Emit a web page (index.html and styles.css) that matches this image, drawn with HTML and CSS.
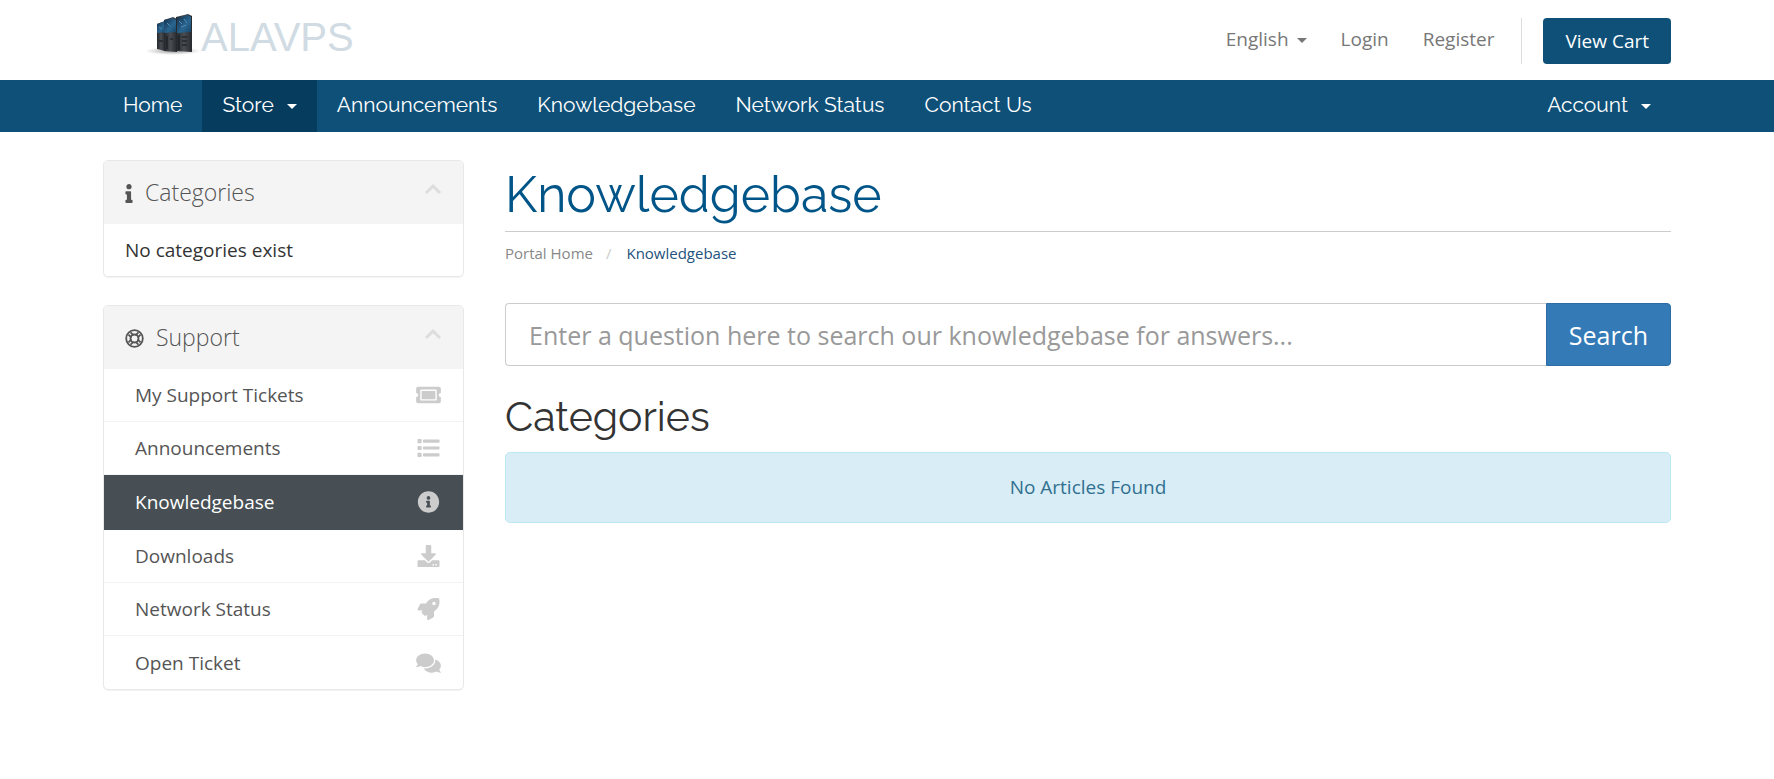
FILE: index.html
```html
<!DOCTYPE html>
<html lang="en">
<head>
    <meta charset="utf-8" />
    <meta name="viewport" content="width=device-width, initial-scale=1" />
    <title>Knowledgebase - ALAVPS</title>
    <link rel="stylesheet" href="styles.css">
</head>
<body>
    <header class="header">
        <div class="container header-inner">
            <a href="#" class="logo">
                <svg class="logo-mark" viewBox="0 0 56 44" aria-hidden="true">
                    <defs>
                        <linearGradient id="glass" x1="0" y1="0" x2="1" y2="1">
                            <stop offset="0" stop-color="#16304a" />
                            <stop offset="0.6" stop-color="#2a6690" />
                            <stop offset="1" stop-color="#174468" />
                        </linearGradient>
                        <linearGradient id="metal" x1="0" y1="0" x2="1" y2="0">
                            <stop offset="0" stop-color="#23282d" />
                            <stop offset="0.5" stop-color="#4a4e53" />
                            <stop offset="1" stop-color="#26292d" />
                        </linearGradient>
                        <radialGradient id="shade">
                            <stop offset="0" stop-color="#777" stop-opacity="0.8" />
                            <stop offset="1" stop-color="#999" stop-opacity="0" />
                        </radialGradient>
                    </defs>
                    <ellipse cx="28" cy="39" rx="28" ry="4" fill="url(#shade)" />
                    <path d="M12 12l8-3v30l-8-2z" fill="url(#metal)" />
                    <path d="M12 12l8-3v11l-8 1z" fill="url(#glass)" />
                    <path d="M19 8l9-3 4 2v33l-13-1z" fill="url(#metal)" />
                    <path d="M19 8l9-2 3 2v12l-12 1z" fill="url(#glass)" />
                    <path d="M31 5l12-3 4 2v36l-16-1z" fill="url(#metal)" />
                    <path d="M32 6l11-3 3 2v15l-14 1z" fill="url(#glass)" />
                    <path d="M14 29h4M22 24v13M25 27h3M34 23v15M37 25h5M37 29h5M37 33h5" stroke="#15191d" stroke-width="1" />
                    <path d="M34 9l3 3M39 7l3 4M36 15l5-2M22 11l3 3M14 15l3 2" stroke="#4f8dbb" stroke-width="1" />
                </svg>
                <span class="logo-text">ALAVPS</span>
            </a>
            <ul class="top-nav">
                <li><a href="#">English<span class="caret"></span></a></li>
                <li><a href="#">Login</a></li>
                <li><a href="#">Register</a></li>
                <li class="primary-action"><a href="#" class="btn-cart">View Cart</a></li>
            </ul>
        </div>
    </header>

    <nav class="main-menu">
        <div class="container menu-inner">
            <a href="#">Home</a>
            <a href="#" class="open">Store<span class="caret"></span></a>
            <a href="#">Announcements</a>
            <a href="#">Knowledgebase</a>
            <a href="#">Network Status</a>
            <a href="#">Contact Us</a>
            <a href="#" class="account">Account<span class="caret"></span></a>
        </div>
    </nav>

    <div class="container main-body">
        <aside class="sidebar">
            <section class="panel">
                <h3 class="panel-heading">
                    <svg class="icon-info" viewBox="0 0 192 512"><path d="M20 424.229h20V279.771H20c-11.046 0-20-8.954-20-20V212c0-11.046 8.954-20 20-20h112c11.046 0 20 8.954 20 20v212.229h20c11.046 0 20 8.954 20 20V492c0 11.046-8.954 20-20 20H20c-11.046 0-20-8.954-20-20v-47.771c0-11.046 8.954-20 20-20zM96 0C56.235 0 24 32.235 24 72s32.235 72 72 72 72-32.235 72-72S135.764 0 96 0z"/></svg>
                    Categories
                    <svg class="minimise" viewBox="0 0 18 12"><path d="M2 10l7-7 7 7"/></svg>
                </h3>
                <div class="panel-body">No categories exist</div>
            </section>

            <section class="panel">
                <h3 class="panel-heading">
                    <svg class="icon-ring" viewBox="0 0 512 512">
                        <circle cx="256" cy="256" r="224"/>
                        <circle cx="256" cy="256" r="108"/>
                        <path d="M94 150l80 80M150 94l80 80M418 150l-80 80M362 94l-80 80M94 362l80-80M150 418l80-80M418 362l-80-80M362 418l-80-80"/>
                    </svg>
                    Support
                    <svg class="minimise" viewBox="0 0 18 12"><path d="M2 10l7-7 7 7"/></svg>
                </h3>
                <div class="list-group">
                    <a href="#">My Support Tickets
                        <svg viewBox="0 0 576 512"><path d="M128 160h320v192H128V160zm400 96c0 26.51 21.49 48 48 48v96c0 26.51-21.49 48-48 48H48c-26.51 0-48-21.49-48-48v-96c26.51 0 48-21.49 48-48s-21.49-48-48-48v-96c0-26.51 21.49-48 48-48h480c26.51 0 48 21.49 48 48v96c-26.51 0-48 21.49-48 48zm-48-104c0-13.255-10.745-24-24-24H120c-13.255 0-24 10.745-24 24v208c0 13.255 10.745 24 24 24h336c13.255 0 24-10.745 24-24V152z"/></svg>
                    </a>
                    <a href="#">Announcements
                        <svg viewBox="0 0 512 512">
                            <rect x="0" y="48" width="96" height="96" rx="16"/><rect x="128" y="60" width="384" height="72" rx="16"/>
                            <rect x="0" y="208" width="96" height="96" rx="16"/><rect x="128" y="220" width="384" height="72" rx="16"/>
                            <rect x="0" y="368" width="96" height="96" rx="16"/><rect x="128" y="380" width="384" height="72" rx="16"/>
                        </svg>
                    </a>
                    <a href="#" class="active">Knowledgebase
                        <svg viewBox="0 0 512 512"><path d="M256 8C119.043 8 8 119.083 8 256c0 136.997 111.043 248 248 248s248-111.003 248-248C504 119.083 392.957 8 256 8zm0 110c23.196 0 42 18.804 42 42s-18.804 42-42 42-42-18.804-42-42 18.804-42 42-42zm56 254c0 6.627-5.373 12-12 12h-88c-6.627 0-12-5.373-12-12v-24c0-6.627 5.373-12 12-12h12v-64h-12c-6.627 0-12-5.373-12-12v-24c0-6.627 5.373-12 12-12h64c6.627 0 12 5.373 12 12v100h12c6.627 0 12 5.373 12 12v24z"/></svg>
                    </a>
                    <a href="#">Downloads
                        <svg viewBox="0 0 512 512"><path d="M216 0h80c13.3 0 24 10.7 24 24v168h87.7c17.8 0 26.7 21.5 14.1 34.1L269.7 378.3c-7.5 7.5-19.8 7.5-27.3 0L90.1 226.1c-12.6-12.6-3.7-34.1 14.1-34.1H192V24c0-13.3 10.7-24 24-24zm296 376v112c0 13.3-10.7 24-24 24H24c-13.3 0-24-10.7-24-24V376c0-13.3 10.7-24 24-24h146.7l49 49c20.1 20.1 52.5 20.1 72.6 0l49-49H488c13.3 0 24 10.7 24 24zm-124 88c0-11-9-20-20-20s-20 9-20 20 9 20 20 20 20-9 20-20zm64 0c0-11-9-20-20-20s-20 9-20 20 9 20 20 20 20-9 20-20z"/></svg>
                    </a>
                    <a href="#">Network Status
                        <svg viewBox="0 0 512 512"><path d="M505.12 19.094c-1.19-5.531-6.658-11-12.207-12.188C460.716 0 435.507 0 410.407 0 307.175 0 245.269 55.203 199.052 128H94.838c-16.348.016-35.557 11.875-42.887 26.484L2.516 253.297A28.4 28.4 0 0 0 0 264a24 24 0 0 0 24 24h103.816l-22.474 22.469c-11.365 11.361-12.996 32.258 0 45.25l50.904 50.906c11.156 11.188 32.156 13.156 45.277 0l22.475-22.469V488a24 24 0 0 0 24 24 28.56 28.56 0 0 0 10.712-2.516l98.728-49.39c14.629-7.297 26.508-26.5 26.508-42.86V312.797c72.598-46.313 128.035-108.406 128.035-211.094.094-25.203.094-50.406-6.861-82.609zM384 168a40 40 0 1 1 40-40 40 40 0 0 1-40 40z"/></svg>
                    </a>
                    <a href="#">Open Ticket
                        <svg viewBox="0 0 576 512"><path d="M416 192c0-88.4-93.1-160-208-160S0 103.6 0 192c0 34.3 14.1 65.9 38 92-13.4 30.2-35.5 54.2-35.8 54.5-2.2 2.3-2.8 5.7-1.5 8.7S4.8 352 8 352c36.6 0 66.9-12.3 88.7-25 32.2 15.7 70.3 25 111.3 25 114.9 0 208-71.6 208-160zm122 220c23.9-26 38-57.7 38-92 0-66.9-53.5-124.2-129.3-148.1.9 6.6 1.3 13.3 1.3 20.1 0 105.9-107.7 192-240 192-10.8 0-21.3-.8-31.7-1.9C207.8 439.6 281.8 480 368 480c41 0 79.1-9.2 111.3-25 21.8 12.7 52.1 25 88.7 25 3.2 0 6.1-1.9 7.3-4.8 1.3-2.9.7-6.3-1.5-8.7-.3-.3-22.4-24.2-35.8-54.5z"/></svg>
                    </a>
                </div>
            </section>
        </aside>

        <main class="content">
            <h1>Knowledgebase</h1>
            <ol class="breadcrumb">
                <li><a href="#">Portal Home</a></li>
                <li class="active">Knowledgebase</li>
            </ol>

            <form class="kb-search">
                <input type="text" aria-label="Search the knowledgebase" placeholder="Enter a question here to search our knowledgebase for answers..." />
                <button type="submit">Search</button>
            </form>

            <h2>Categories</h2>
            <div class="alert">No Articles Found</div>
        </main>
    </div>
</body>
</html>
```
FILE: styles.css
```css
* {
    margin: 0;
    padding: 0;
    box-sizing: border-box;
}

body {
    font-family: "Open Sans", sans-serif;
    font-size: 19px;
    line-height: 26px;
    color: #333;
    background: #fff;
}

a {
    text-decoration: none;
}

.container {
    max-width: 1568px;
    margin: 0 auto;
}

.caret {
    display: inline-block;
    border-top: 5px solid;
    border-left: 5px solid transparent;
    border-right: 5px solid transparent;
    vertical-align: middle;
}

/* Header */
.header-inner {
    display: flex;
    justify-content: space-between;
    height: 80px;
}

.logo {
    display: flex;
    align-items: flex-start;
    padding: 12px 0 0 42px;
}

.logo-mark {
    width: 56px;
    height: 44px;
}

.logo-text {
    padding-top: 3px;
    font-family: "Liberation Sans", Arial, sans-serif;
    font-size: 40px;
    line-height: 44px;
    color: #d0dbe3;
}

.top-nav {
    display: flex;
    padding-top: 18px;
    list-style: none;
}

.top-nav a {
    display: block;
    padding: 8px 17px;
    color: #777;
}

.top-nav .caret {
    margin-left: 8px;
}

.top-nav .primary-action {
    height: 46px;
    margin-left: 10px;
    padding-left: 21px;
    border-left: 1px solid #ddd;
}

.top-nav .btn-cart {
    padding: 10px 22px;
    background: #0f5078;
    border-radius: 4px;
    color: #fff;
}

/* Main menu */
.main-menu {
    background: #0f5078;
}

.menu-inner {
    display: flex;
    font-family: Raleway, Lato, sans-serif;
    font-size: 21px;
}

.menu-inner a {
    padding: 12px 20px 14px;
    color: #fff;
}

.menu-inner .open {
    background: #063d5f;
}

.menu-inner .caret {
    margin-left: 13px;
}

.menu-inner .account {
    margin-left: auto;
}

/* Page body */
.main-body {
    display: grid;
    grid-template-columns: 361px 1fr;
    gap: 41px;
    padding-top: 28px;
}

.panel {
    margin-bottom: 28px;
    border: 1px solid #e8e8e8;
    border-radius: 5px;
    box-shadow: 0 1px 1px rgba(0, 0, 0, 0.05);
    overflow: hidden;
}

.panel-heading {
    display: flex;
    align-items: center;
    gap: 12px;
    padding: 15px 21px 16px;
    background: #f4f4f4;
    font-size: 23px;
    font-weight: 300;
    line-height: 32px;
    color: #555;
}

.panel-heading svg {
    height: 19px;
    margin-top: 2px;
    fill: #555;
}

.icon-info {
    width: 8px;
}

.panel-heading .icon-ring {
    width: 19px;
    fill: none;
    stroke: #555;
    stroke-width: 48;
}

.panel-heading .minimise {
    width: 18px;
    height: 12px;
    margin: 0 0 6px auto;
    fill: none;
    stroke: #ddd;
    stroke-width: 3;
}

.panel-body {
    padding: 13px 21px;
}

.list-group a {
    display: flex;
    align-items: center;
    justify-content: space-between;
    height: 53px;
    padding: 0 22px 0 31px;
    border-bottom: 1px solid #f3f3f3;
    color: #555;
}

.list-group a:last-child {
    border-bottom: 0;
}

.list-group .active {
    height: 55px;
    background: #474f54;
    border-color: #474f54;
    color: #fff;
}

.list-group svg {
    width: 25px;
    height: 22px;
    fill: #ccc;
}

/* Content */
.content h1 {
    padding: 3px 0 4px;
    border-bottom: 1px solid #ccc;
    font-family: Raleway, Lato, sans-serif;
    font-size: 50px;
    font-weight: 400;
    line-height: 64px;
    color: #058;
}

.breadcrumb {
    display: flex;
    padding: 10px 0 12px;
    font-size: 15px;
    line-height: 22px;
    list-style: none;
}

.breadcrumb a {
    color: #888;
}

.breadcrumb .active {
    color: #23527c;
}

.breadcrumb .active::before {
    content: "/";
    padding: 0 15px 0 13px;
    color: #ccc;
}

.kb-search {
    display: flex;
    margin: 27px 0;
}

.kb-search input,
.kb-search button {
    height: 63px;
    font-family: inherit;
    font-size: 25px;
}

.kb-search input {
    flex: 1;
    min-width: 0;
    padding: 0 23px;
    border: 1px solid #ccc;
    border-right: 0;
    border-radius: 4px 0 0 4px;
}

.kb-search input::placeholder {
    color: #999;
}

.kb-search button {
    padding: 0 22px;
    background: #337ab7;
    border: 1px solid #2e6da4;
    border-radius: 0 4px 4px 0;
    color: #fff;
}

.content h2 {
    margin-bottom: 11px;
    font-family: Raleway, Lato, sans-serif;
    font-size: 41px;
    font-weight: 400;
    line-height: 48px;
}

.alert {
    padding: 21px;
    background: #d9edf7;
    border: 1px solid #bce8f1;
    border-radius: 5px;
    line-height: 27px;
    text-align: center;
    color: #31708f;
}
```
